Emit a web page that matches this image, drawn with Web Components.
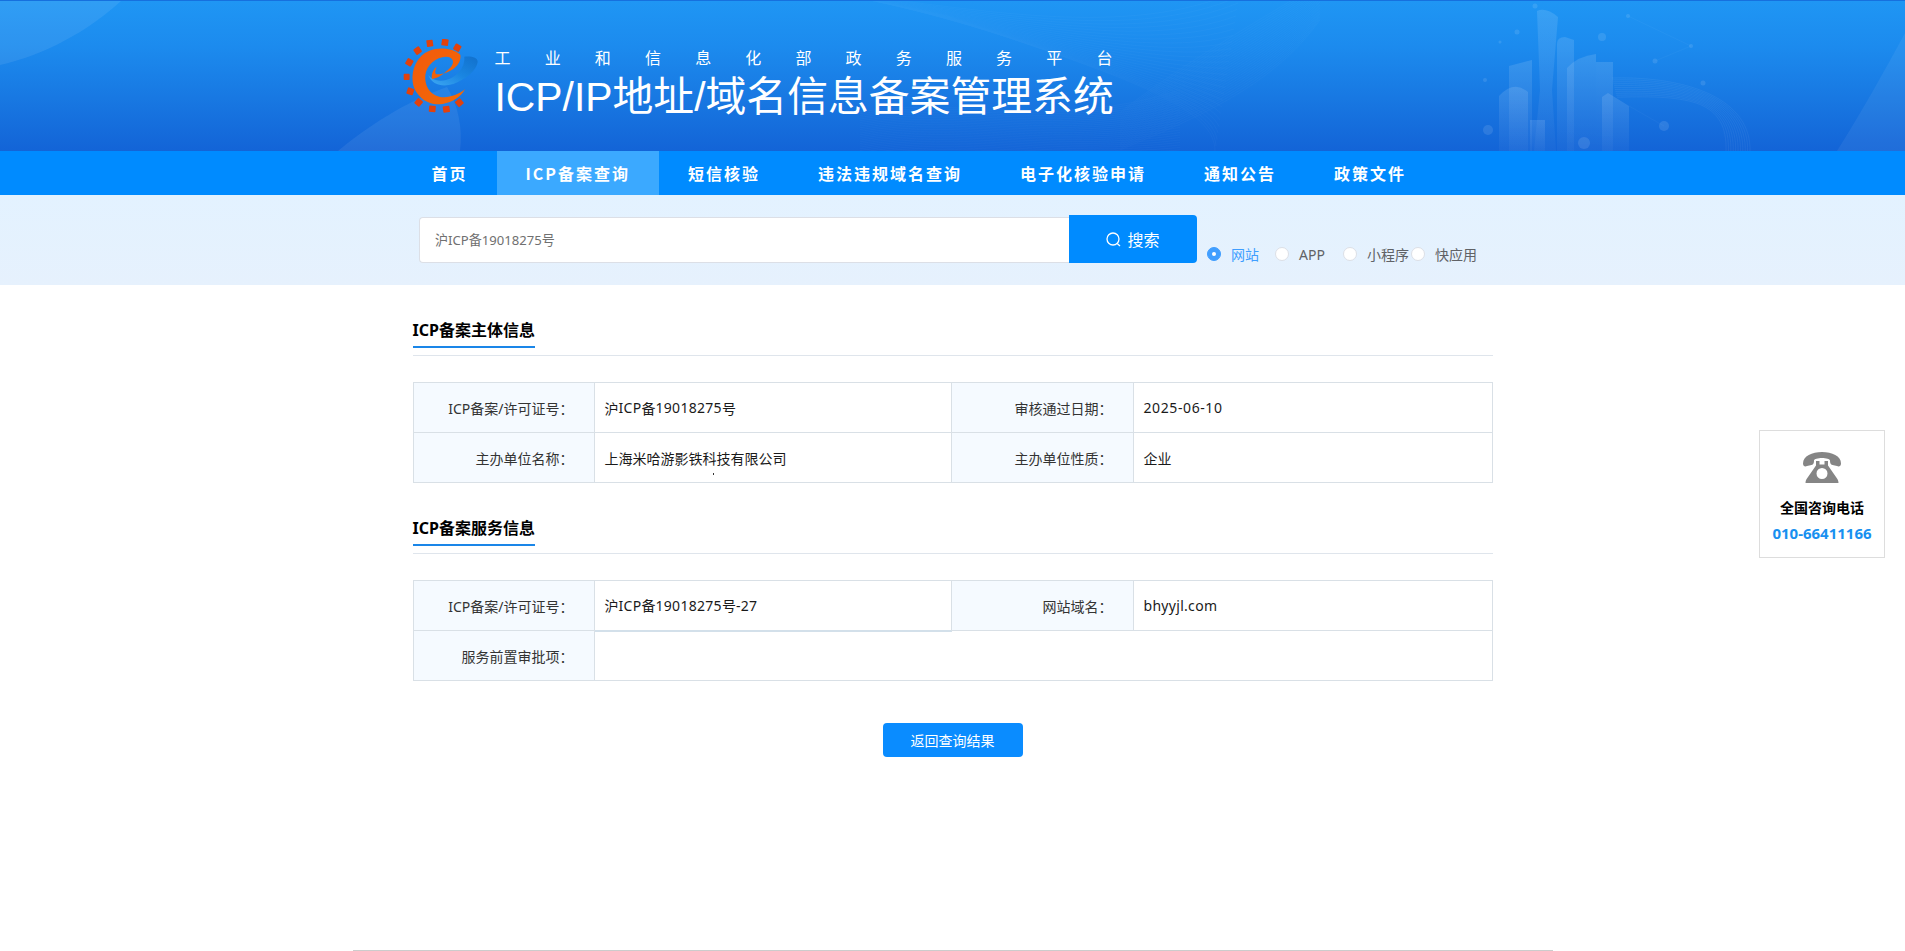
<!DOCTYPE html>
<html lang="zh-CN">
<head>
<meta charset="utf-8">
<title>ICP/IP地址/域名信息备案管理系统</title>
<style>
html,body{margin:0;padding:0;background:#fff;}
body{font-family:"Noto Sans","Noto Sans CJK SC",sans-serif;font-size:14px;color:#222;min-height:951px;display:flex;flex-direction:column;overflow:hidden;height:951px;}
icp-main{flex:1;}
.n3{letter-spacing:.3px}.n6{letter-spacing:.6px}
</style>
</head>
<body>
<icp-header></icp-header>
<icp-nav active="1">
  <icp-nav-item>首页</icp-nav-item>
  <icp-nav-item active>ICP备案查询</icp-nav-item>
  <icp-nav-item>短信核验</icp-nav-item>
  <icp-nav-item>违法违规域名查询</icp-nav-item>
  <icp-nav-item>电子化核验申请</icp-nav-item>
  <icp-nav-item>通知公告</icp-nav-item>
  <icp-nav-item>政策文件</icp-nav-item>
</icp-nav>
<icp-search value="沪ICP备19018275号">
  <icp-radio checked>网站</icp-radio>
  <icp-radio>APP</icp-radio>
  <icp-radio>小程序</icp-radio>
  <icp-radio>快应用</icp-radio>
</icp-search>
<icp-main>
  <icp-section heading="ICP备案主体信息">
    <icp-grid>
      <icp-cell label>ICP备案/许可证号：</icp-cell>
      <icp-cell>沪<span class="n3">ICP</span>备<span class="n3">19018275</span>号</icp-cell>
      <icp-cell label>审核通过日期：</icp-cell>
      <icp-cell><span class="n6">2025-06-10</span></icp-cell>
      <icp-cell label>主办单位名称：</icp-cell>
      <icp-cell speck>上海米哈游影铁科技有限公司</icp-cell>
      <icp-cell label>主办单位性质：</icp-cell>
      <icp-cell>企业</icp-cell>
    </icp-grid>
  </icp-section>
  <icp-section heading="ICP备案服务信息">
    <icp-grid>
      <icp-cell label>ICP备案/许可证号：</icp-cell>
      <icp-cell thick>沪<span class="n3">ICP</span>备<span class="n3">19018275</span>号<span class="n3">-27</span></icp-cell>
      <icp-cell label>网站域名：</icp-cell>
      <icp-cell><span class="n3">bhyyjl.com</span></icp-cell>
      <icp-cell label>服务前置审批项：</icp-cell>
      <icp-cell wide></icp-cell>
    </icp-grid>
  </icp-section>
  <icp-back>返回查询结果</icp-back>
</icp-main>
<icp-contact></icp-contact>
<icp-footer></icp-footer>

<script>
function define(name, css, html, extra){
  const tpl=document.createElement('template');
  tpl.innerHTML='<style>'+css+'</style>'+html;
  customElements.define(name,class extends HTMLElement{
    constructor(){super();this.attachShadow({mode:'open'}).appendChild(tpl.content.cloneNode(true));}
    connectedCallback(){if(extra)extra.call(this,this.shadowRoot);}
  });
}

function waves(){
  let out='';
  for(let i=0;i<26;i++){
    const d=i*5;
    out+=`<path d="M${820+d} ${-10+d*0.2} C ${980+d} ${10+d*0.5}, ${1130+d*0.7} ${40+d*0.5}, ${1240-d*0.2} ${-10+d*1.3}"/>`;
    out+=`<path d="M${860} ${112+d*0.35} C ${960} ${96+d*0.35}, ${1060} ${130+d*0.25}, ${1180} ${90+d*0.5}"/>`;
    out+=`<path d="M${1120} ${150-d*0.3} C ${1190} ${120-d*0.5}, ${1270} ${90-d*0.6}, ${1320} ${20-d*0.3}"/>`;
  }
  return out;
}
function arcs(){
  let out='';
  for(let i=0;i<11;i++){
    const r=i*2.4;
    out+=`<path d="M${1612+r*0.2} ${78+r*0.8} C ${1690} ${76+r*0.8}, ${1752-r} ${100}, ${1750-r} ${152}"/>`;
  }
  return out;
}

define('icp-logo',':host{display:block;width:75px;height:74px;flex:none}svg{display:block;filter:blur(.35px)}',`
<svg width="75" height="74" viewBox="21 27 225 222" aria-hidden="true">
  <defs>
    <linearGradient id="b" x1="0" y1="1" x2="1" y2="0"><stop offset="0" stop-color="#3fa9f3"/><stop offset=".5" stop-color="#1a86e2"/><stop offset="1" stop-color="#1170cc"/></linearGradient>
    <linearGradient id="o" x1="0" y1="0" x2="1" y2="1"><stop offset="0" stop-color="#f25a0c"/><stop offset="1" stop-color="#f26a06"/></linearGradient>
  </defs>
  <g fill="#e2410c">
    <rect x="92" y="30" width="19" height="20" rx="2" transform="rotate(-8 101 40)"/>
    <rect x="137" y="27" width="20" height="20" rx="2" transform="rotate(8 147 37)"/>
    <rect x="174" y="43" width="20" height="20" rx="3" transform="rotate(30 184 53)"/>
    <rect x="55" y="52" width="20" height="20" rx="3" transform="rotate(-35 65 62)"/>
    <rect x="30" y="87" width="20" height="20" rx="3" transform="rotate(-60 40 97)"/>
    <rect x="23" y="131" width="18" height="19" rx="3"/>
    <rect x="33" y="174" width="20" height="20" rx="3" transform="rotate(20 43 184)"/>
    <rect x="58" y="207" width="20" height="20" rx="3" transform="rotate(40 68 217)"/>
    <rect x="99" y="227" width="20" height="19" rx="2" transform="rotate(5 109 236)"/>
    <rect x="141" y="228" width="20" height="19" rx="2" transform="rotate(-8 151 237)"/>
    <rect x="180" y="208" width="20" height="20" rx="2" transform="rotate(-40 190 218)"/>
  </g>
  <path fill="url(#b)" d="M205 80C225 78 246 82 245 96C243 118 212 148 172 162C140 172 108 165 97 135C108 150 128 155 150 150C185 140 208 110 205 80Z"/>
  <path fill="url(#o)" d="M193 74C172 54 130 50 100 62C62 78 46 118 50 155C55 198 98 229 140 222C170 217 195 200 207 178C185 195 155 206 130 200C100 194 85 165 88 135C92 105 120 80 150 80C172 80 178 98 162 114C146 130 126 145 108 147C105 132 112 118 122 110C116 124 116 133 125 133C162 130 198 106 193 74Z"/>
</svg>`);

define('icp-header',`
:host{display:block;height:151px;position:relative;overflow:hidden;background:linear-gradient(180deg,#1f96f4 0%,#1c8bee 30%,#1878e2 65%,#1364d7 100%);box-sizing:border-box;border-top:1px solid #1670de}
.bg{position:absolute;left:0;top:-1px;width:1905px;height:151px}
.inner{position:relative;width:1100px;height:100%;margin:0 auto;display:flex;align-items:flex-start}
icp-logo{margin-top:38px;margin-right:17px;margin-left:0}
.titles{width:618px;color:#fff;display:flex;flex-direction:column;padding-top:49px;font-family:"Liberation Sans","Noto Sans CJK SC",sans-serif;}
.sub{display:flex;justify-content:space-between;font-size:16px;line-height:18px;}
.main{font-size:40.85px;line-height:48px;margin-top:5px;white-space:nowrap;font-weight:400;}
`,`
<svg class="bg" viewBox="0 0 1905 151" aria-hidden="true">
  <defs>
    <linearGradient id="bld" x1="0" y1="0" x2="0" y2="1"><stop offset="0" stop-color="#fff" stop-opacity=".12"/><stop offset="1" stop-color="#fff" stop-opacity=".03"/></linearGradient>
  </defs>
  <path d="M0 0H122C90 30 45 55 0 65Z" fill="#fff" opacity=".08"/>
  <path d="M338 151C375 120 415 98 447 87C458 105 463 128 460 151Z" fill="#fff" opacity=".07"/>
  <path d="M1837 151C1860 115 1885 70 1905 33V151Z" fill="#fff" opacity=".06"/>
  <g fill="none" stroke="#fff" stroke-width=".6" opacity=".035" id="w"></g>
  <g fill="none" stroke="#fff" stroke-width=".5" opacity=".1" id="a"></g>
  <g fill="url(#bld)">
    <path d="M1557 151V44Q1557 37 1565 37L1574 40V151Z"/>
    <path d="M1509 151V66L1532 60V151Z"/>
    <path d="M1596 151V62H1613V151Z"/>
    <path d="M1537 11Q1546 7 1558 17L1552 90L1556 151H1534L1540 90Z"/>
    <path d="M1499 151V96Q1514 80 1528 92V151Z"/>
    <path d="M1567 151V68Q1578 56 1596 54V151Z"/>
    <path d="M1602 151V97L1608 93L1629 106V151Z"/>
    <path d="M1530 151V120H1545V151Z"/>
  </g>
  <g fill="#fff" opacity=".1">
    <circle cx="1517" cy="32" r="2.500"/><circle cx="1602" cy="37" r="4"/><circle cx="1535" cy="6" r="2.500"/>
    <circle cx="1628" cy="16" r="2"/><circle cx="1691" cy="46" r="2"/><circle cx="1655" cy="61" r="2.500"/>
    <circle cx="1703" cy="83" r="2.500"/><circle cx="1664" cy="126" r="5"/><circle cx="1488" cy="130" r="5"/>
    <circle cx="1584" cy="143" r="6"/><circle cx="1485" cy="80" r="2"/><circle cx="1500" cy="42" r="1.500"/>
  </g>
  <path d="M1655 61L1691 46M1628 16L1691 46M1629 106L1664 126" stroke="#fff" stroke-width=".6" opacity=".06" fill="none"/>
</svg>
<div class="inner">
  <icp-logo></icp-logo>
  <div class="titles">
    <div class="sub"><span>工</span><span>业</span><span>和</span><span>信</span><span>息</span><span>化</span><span>部</span><span>政</span><span>务</span><span>服</span><span>务</span><span>平</span><span>台</span></div>
    <div class="main">ICP/IP地址/域名信息备案管理系统</div>
  </div>
</div>`,function(r){
  r.getElementById('w').innerHTML=waves();
  r.getElementById('a').innerHTML=arcs();
});

define('icp-nav',`
:host{display:block;height:44px;background:#008bff;}
.inner{width:1100px;height:100%;margin:0 auto;display:flex;}
`,`<div class="inner"><slot></slot></div>`);

define('icp-nav-item',`
:host{display:flex;align-items:center;height:44px;padding:0 29px;font-size:16px;font-weight:700;letter-spacing:2px;color:#fff;white-space:nowrap;box-sizing:border-box;font-family:"Noto Sans CJK SC","Noto Sans",sans-serif;}
:host([active]){background:#3ba9ff}
`,`<slot></slot>`);

define('icp-radio',`
:host{display:flex;align-items:center;width:68px;flex:none;color:#606266;font-size:14px;white-space:nowrap;line-height:20px}
.c{width:14px;height:14px;box-sizing:border-box;border-radius:50%;background:#fff;border:1px solid #dcdfe6;margin-right:10px;flex:none;display:flex;align-items:center;justify-content:center;position:relative;top:-1px}
:host([checked]){color:#409eff}
:host([checked]) .c{background:#409eff;border-color:#409eff}
:host([checked]) .c::after{content:"";width:4px;height:4px;border-radius:50%;background:#fff}
`,`<span class="c"></span><slot></slot>`);

define('icp-search',`
:host{display:block;height:90px;background:linear-gradient(180deg,#e3f2ff,#e6f1fd);}
.inner{width:1080px;height:100%;margin:0 auto;display:flex;align-items:flex-start;padding-left:6.5px;box-sizing:border-box}
.input{width:650px;height:46px;box-sizing:border-box;margin-top:22px;background:#fff;border:1px solid #dcdfe6;border-right:none;border-radius:4px 0 0 4px;display:flex;align-items:center;padding:0 0 2px 15px;color:#707070;font-size:13.1px}
.btn{width:128px;height:48px;margin-top:20px;background:#008bff;border-radius:0 4px 4px 0;color:#fff;font-size:16px;display:flex;align-items:center;justify-content:center;gap:6px;}
.radios{display:flex;margin-left:10px;margin-top:50px;}
svg{display:block}
`,`
<div class="inner">
  <div class="input"><span id="v"></span></div>
  <div class="btn"><svg width="15" height="15" viewBox="0 0 15 15" fill="none" stroke="#fff" stroke-width="1.300"><circle cx="7" cy="7" r="6"/><path d="M11.200 11.400L14 14"/></svg>搜索</div>
  <div class="radios"><slot></slot></div>
</div>`,function(r){r.getElementById('v').textContent=this.getAttribute('value');});

define('icp-main',`:host{display:block;width:1080px;margin:0 auto;padding-top:26px;}`,`<slot></slot>`);

define('icp-section',`
:host{display:block;margin-bottom:26px}
.head{border-bottom:1px solid #dfe5ec;height:45px;box-sizing:border-box;margin-bottom:26px;display:flex}
.t{font-size:16px;font-weight:700;color:#000;line-height:22px;height:37px;box-sizing:border-box;border-bottom:2px solid #1a86e8;padding-top:8px;font-family:"Noto Sans","Noto Sans CJK SC",sans-serif;}
`,`<div class="head"><div class="t" id="t"></div></div><slot></slot>`,function(r){r.getElementById('t').textContent=this.getAttribute('heading');});

define('icp-grid',`
:host{display:grid;grid-template-columns:181px 357px 182px 1fr;border-top:1px solid #d9e0e6;border-left:1px solid #d9e0e6;box-sizing:border-box;grid-auto-rows:50px}
`,`<slot></slot>`);

define('icp-cell',`
:host{display:flex;align-items:center;justify-content:flex-start;box-sizing:border-box;border-right:1px solid #d9e0e6;border-bottom:1px solid #d9e0e6;padding-left:10px;color:#1a1a1a;font-size:14px;white-space:nowrap;position:relative;background:#fff}
:host([label]){justify-content:flex-end;padding-left:0;padding-right:20px;background:#f5faff;color:#333}
:host([wide]){grid-column:span 3}
:host([thick]){border-bottom:2px solid #d3e0ea;height:51px;padding-bottom:1px;z-index:1}
:host([speck])::after{content:"";position:absolute;left:118px;top:40px;width:1.500px;height:1.500px;background:#333}
`,`<slot></slot>`);

define('icp-back',`
:host{display:flex;justify-content:center;margin-top:42px;}
.b{width:140px;height:34px;background:#0a8cff;border-radius:4px;color:#fff;font-size:14px;display:flex;align-items:center;justify-content:center}
`,`<div class="b"><slot></slot></div>`);

define('icp-contact',`
:host{display:flex;flex-direction:column;align-items:center;position:absolute;right:20px;top:430px;width:126px;height:128px;box-sizing:border-box;border:1px solid #ddd;background:#fff;padding-top:21px}
.l{font-size:14px;font-weight:700;color:#000;margin-top:14px;line-height:20px;font-family:"Noto Sans CJK SC","Noto Sans",sans-serif;}
.n{font-size:15px;font-weight:700;color:#1890f0;line-height:22px;margin-top:5px;white-space:nowrap}
svg{display:block}
`,`
<svg width="38" height="31" viewBox="0 0 38 31" aria-hidden="true"><path fill="#858585" d="M0 11.500C0 4 9 0 19 0C29 0 38 4 38 11.500C38 14 36 15 34 14L29.500 13C27.500 12.500 27 11 27 8.500C27 7 23 6 19 6C15 6 11 7 11 8.500C11 11 10.500 12.500 8.500 13L4 14C2 15 0 14 0 11.500Z"/><path fill="#858585" fill-rule="evenodd" d="M13 9H16.500V12.500H21.500V9H25V13.500L33 25C34.500 27 35.500 28.500 35.500 31H2.500C2.500 28.500 3.500 27 5 25L13 13.500ZM19 16A5.500 5.500 0 1 0 19 27A5.500 5.500 0 1 0 19 16Z"/></svg>
<div class="l">全国咨询电话</div>
<div class="n">010-66411166</div>`);

define('icp-footer',`
:host{display:block;width:1200px;height:1px;margin:0 auto;background:#ccc;flex:none}
`,``);
</script>
</body>
</html>
